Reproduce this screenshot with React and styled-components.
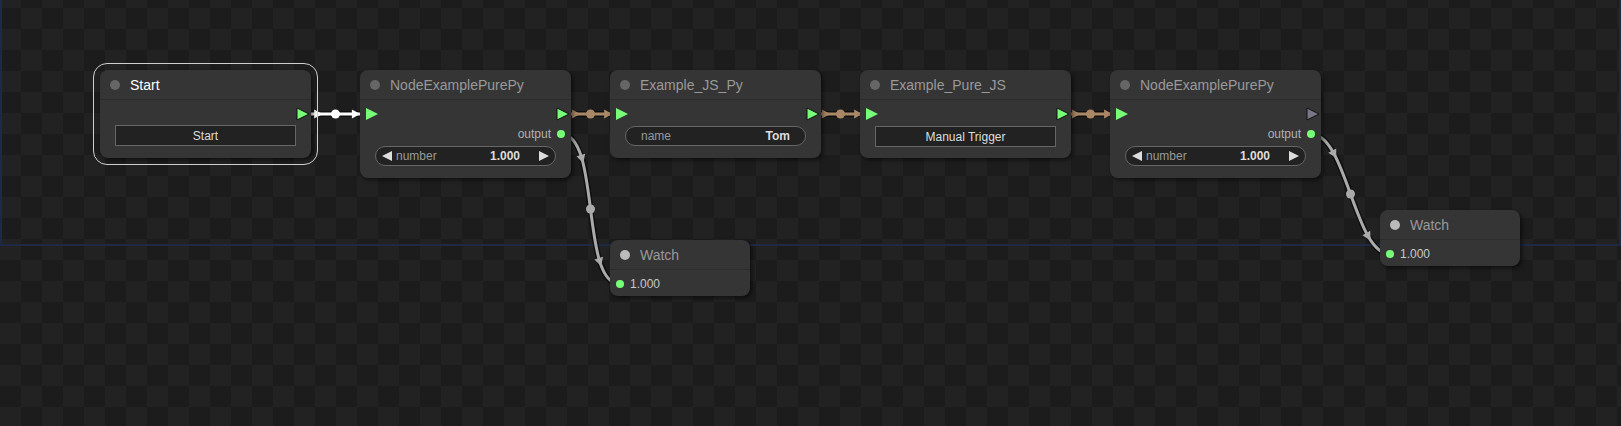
import React from "react";
import styled, { createGlobalStyle } from "styled-components";

const GlobalStyle = createGlobalStyle`
  html, body {
    margin: 0;
    padding: 0;
    background: #1d1d1d;
  }
  body {
    font-family: "Liberation Sans", Arial, sans-serif;
  }
`;

// link endpoints are slot centres on the canvas
const LINKS = [
  { a: [301, 114], b: [370, 114], color: "#ffffff" },
  { a: [561, 114], b: [620, 114], color: "#aa8866" },
  { a: [811, 114], b: [870, 114], color: "#aa8866" },
  { a: [1061, 114], b: [1120, 114], color: "#aa8866" },
  { a: [561, 134], b: [620, 284], color: "#aaaaaa" },
  { a: [1311, 134], b: [1390, 254], color: "#aaaaaa" },
];

function bezier(p, t) {
  const u = 1 - t;
  const k = [u * u * u, 3 * u * u * t, 3 * u * t * t, t * t * t];
  return [0, 1].map((i) => k[0] * p[0][i] + k[1] * p[1][i] + k[2] * p[2][i] + k[3] * p[3][i]);
}

function linkPoints(a, b) {
  const dist = Math.hypot(b[0] - a[0], b[1] - a[1]) * 0.25;
  return [a, [a[0] + dist, a[1]], [b[0] - dist, b[1]], b];
}

function Arrow({ pts, t, color }) {
  const p = bezier(pts, t);
  const q = bezier(pts, t + 0.01);
  const len = Math.hypot(q[0] - p[0], q[1] - p[1]);
  const d = [(q[0] - p[0]) / len, (q[1] - p[1]) / len];
  const n = [-d[1], d[0]];
  const tip = [p[0] + d[0] * 6, p[1] + d[1] * 6];
  const b1 = [p[0] - d[0] * 2.5 + n[0] * 4.5, p[1] - d[1] * 2.5 + n[1] * 4.5];
  const b2 = [p[0] - d[0] * 2.5 - n[0] * 4.5, p[1] - d[1] * 2.5 - n[1] * 4.5];
  return <polygon points={[tip, b1, b2].map((v) => v.join(",")).join(" ")} fill={color} />;
}

function Link({ a, b, color }) {
  const pts = linkPoints(a, b);
  const d = `M${pts[0].join(" ")} C${pts[1].join(" ")} ${pts[2].join(" ")} ${pts[3].join(" ")}`;
  const mid = bezier(pts, 0.5);
  return (
    <g>
      <path d={d} fill="none" stroke="rgba(0,0,0,0.5)" strokeWidth="6" />
      <path d={d} fill="none" stroke={color} strokeWidth="3" />
      <Arrow pts={pts} t={0.25} color={color} />
      <Arrow pts={pts} t={0.75} color={color} />
      <circle cx={mid[0]} cy={mid[1]} r="4.5" fill={color} />
    </g>
  );
}

function Tri({ color = "#77ff77", outline }) {
  return (
    <svg width="14" height="14" viewBox="-1 -0.5 14 14">
      <polygon
        points="12,6.5 0,0.5 0,12.5"
        fill={color}
        stroke={outline ? "#111" : "none"}
        strokeWidth="1"
      />
    </svg>
  );
}

function SmallArrow({ right }) {
  return (
    <svg width="10" height="10" viewBox="0 0 10 10">
      <polygon points={right ? "0,0 10,5 0,10" : "10,0 0,5 10,10"} fill="#dddddd" />
    </svg>
  );
}

function NumberWidget({ label, value }) {
  return (
    <Pill>
      <SmallArrow />
      <WidgetLabel $gap={4}>{label}</WidgetLabel>
      <WidgetValue $right={19}>{value}</WidgetValue>
      <SmallArrow right />
    </Pill>
  );
}

function TextWidget({ label, value }) {
  return (
    <Pill $pad={15}>
      <WidgetLabel>{label}</WidgetLabel>
      <WidgetValue>{value}</WidgetValue>
    </Pill>
  );
}

export default function App() {
  return (
    <>
      <GlobalStyle />
      <Canvas>
        <Bounds />
        <Links width="1621" height="426">
          {LINKS.map((l, i) => (
            <Link key={i} {...l} />
          ))}
        </Links>

        <Node $x={100} $y={70} $w={211} $h={88} $selected>
          <Title>
            <TitleDot />
            <TitleText $active>Start</TitleText>
          </Title>
          <Body>
            <SlotRow>
              <span />
              <OutSlot>
                <Tri outline />
              </OutSlot>
            </SlotRow>
            <Button>Start</Button>
          </Body>
        </Node>

        <Node $x={360} $y={70} $w={211} $h={108}>
          <Title>
            <TitleDot />
            <TitleText>NodeExamplePurePy</TitleText>
          </Title>
          <Body>
            <SlotRow>
              <InSlot>
                <Tri />
              </InSlot>
              <OutSlot>
                <Tri outline />
              </OutSlot>
            </SlotRow>
            <SlotRow>
              <span />
              <DataOut>
                <SlotLabel>output</SlotLabel>
                <SlotDot />
              </DataOut>
            </SlotRow>
            <WidgetRow $top={2}>
              <NumberWidget label="number" value="1.000" />
            </WidgetRow>
          </Body>
        </Node>

        <Node $x={610} $y={70} $w={211} $h={88}>
          <Title>
            <TitleDot />
            <TitleText>Example_JS_Py</TitleText>
          </Title>
          <Body>
            <SlotRow>
              <InSlot>
                <Tri />
              </InSlot>
              <OutSlot>
                <Tri outline />
              </OutSlot>
            </SlotRow>
            <WidgetRow $top={2}>
              <TextWidget label="name" value="Tom" />
            </WidgetRow>
          </Body>
        </Node>

        <Node $x={860} $y={70} $w={211} $h={88}>
          <Title>
            <TitleDot />
            <TitleText>Example_Pure_JS</TitleText>
          </Title>
          <Body>
            <SlotRow>
              <InSlot>
                <Tri />
              </InSlot>
              <OutSlot>
                <Tri outline />
              </OutSlot>
            </SlotRow>
            <Button $top={2}>Manual Trigger</Button>
          </Body>
        </Node>

        <Node $x={1110} $y={70} $w={211} $h={108}>
          <Title>
            <TitleDot />
            <TitleText>NodeExamplePurePy</TitleText>
          </Title>
          <Body>
            <SlotRow>
              <InSlot>
                <Tri />
              </InSlot>
              <OutSlot>
                <Tri color="#777788" outline />
              </OutSlot>
            </SlotRow>
            <SlotRow>
              <span />
              <DataOut>
                <SlotLabel>output</SlotLabel>
                <SlotDot />
              </DataOut>
            </SlotRow>
            <WidgetRow $top={2}>
              <NumberWidget label="number" value="1.000" />
            </WidgetRow>
          </Body>
        </Node>

        <Node $x={610} $y={240} $w={140} $h={56}>
          <Title>
            <TitleDot $color="#bbbbbb" />
            <TitleText>Watch</TitleText>
          </Title>
          <Body>
            <SlotRow>
              <DataIn>
                <SlotDot />
                <SlotValue>1.000</SlotValue>
              </DataIn>
            </SlotRow>
          </Body>
        </Node>

        <Node $x={1380} $y={210} $w={140} $h={56}>
          <Title>
            <TitleDot $color="#bbbbbb" />
            <TitleText>Watch</TitleText>
          </Title>
          <Body>
            <SlotRow>
              <DataIn>
                <SlotDot />
                <SlotValue>1.000</SlotValue>
              </DataIn>
            </SlotRow>
          </Body>
        </Node>
      </Canvas>
    </>
  );
}

const Canvas = styled.div`
  position: relative;
  width: 1621px;
  height: 426px;
  overflow: hidden;
  background-color: #222222;
  background-image: conic-gradient(
    transparent 25%,
    #1c1c1c 0 50%,
    transparent 0 75%,
    #1c1c1c 0
  );
  background-size: 42px 42px;
  background-position: 0 8px;
`;

const Bounds = styled.div`
  position: absolute;
  left: 0;
  top: -4px;
  width: 1621px;
  height: 250px;
  box-sizing: border-box;
  border: 2px solid #1e2a44;
`;

const Links = styled.svg`
  position: absolute;
  left: 0;
  top: 0;
  z-index: 0;
`;

const Node = styled.div`
  position: absolute;
  z-index: 1;
  left: ${(p) => p.$x}px;
  top: ${(p) => p.$y}px;
  width: ${(p) => p.$w}px;
  height: ${(p) => p.$h}px;
  display: flex;
  flex-direction: column;
  background: #353535;
  border-radius: 8px;
  box-shadow: 2px 2px 4px rgba(0, 0, 0, 0.55);

  &::after {
    content: "";
    display: ${(p) => (p.$selected ? "block" : "none")};
    position: absolute;
    inset: -7px;
    border: 1.5px solid #cfcfcf;
    border-radius: 14px;
    pointer-events: none;
  }
`;

const Title = styled.div`
  height: 30px;
  box-sizing: border-box;
  display: flex;
  align-items: center;
  gap: 10px;
  padding-left: 10px;
  border-bottom: 1px solid #2c2c2c;
`;

const TitleDot = styled.span`
  width: 10px;
  height: 10px;
  border-radius: 50%;
  background: ${(p) => p.$color || "#666666"};
`;

const TitleText = styled.span`
  font-size: 14px;
  color: ${(p) => (p.$active ? "#ffffff" : "#999999")};
`;

const Body = styled.div`
  display: flex;
  flex-direction: column;
  padding-top: 4px;
`;

const SlotRow = styled.div`
  height: 20px;
  display: flex;
  align-items: center;
  justify-content: space-between;
`;

const InSlot = styled.span`
  display: flex;
  margin-left: 5px;
`;

const OutSlot = styled.span`
  display: flex;
  margin-right: 1px;
`;

const DataOut = styled.span`
  display: flex;
  align-items: center;
  gap: 6px;
  margin-right: 6px;
`;

const DataIn = styled.span`
  display: flex;
  align-items: center;
  gap: 6px;
  margin-left: 6px;
`;

const SlotDot = styled.span`
  width: 8px;
  height: 8px;
  border-radius: 50%;
  background: #77ff77;
`;

const SlotLabel = styled.span`
  font-size: 12px;
  color: #b0b0b0;
`;

const SlotValue = styled.span`
  font-size: 12px;
  color: #c8c8c8;
`;

const WidgetRow = styled.div`
  margin: ${(p) => p.$top || 0}px 15px 0;
  display: flex;
`;

const Button = styled.div`
  margin: ${(p) => p.$top || 1}px 15px 0;
  height: 21px;
  box-sizing: border-box;
  display: flex;
  align-items: center;
  justify-content: center;
  background: #222222;
  border: 1px solid #666666;
  font-size: 12px;
  color: #dddddd;
`;

const Pill = styled.div`
  flex: 1;
  height: 20px;
  box-sizing: border-box;
  display: flex;
  align-items: center;
  padding: 0 ${(p) => p.$pad ?? 6}px;
  background: #222222;
  border: 1px solid #666666;
  border-radius: 10px;
  font-size: 12px;
`;

const WidgetLabel = styled.span`
  flex: 1;
  margin-left: ${(p) => p.$gap || 0}px;
  color: #999999;
`;

const WidgetValue = styled.span`
  margin-right: ${(p) => p.$right || 0}px;
  color: #dddddd;
  font-weight: bold;
`;
